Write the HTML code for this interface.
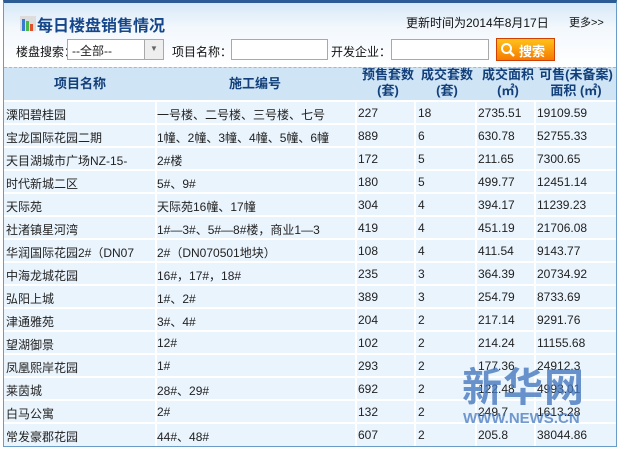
<!DOCTYPE html>
<html><head><meta charset="utf-8"><style>
*{margin:0;padding:0;box-sizing:border-box}
body{width:619px;height:449px;overflow:hidden;background:#fff;font-family:"Liberation Sans","Noto Sans CJK SC",sans-serif;font-size:12px;color:#222;position:relative}
.frame{position:absolute;left:3px;top:0;width:614px;height:447px;border:1px solid #6a9cc8;border-top:3px solid #2d5b93;background:#eaf4fd}
.top{position:absolute;left:4px;top:3px;width:612px;height:64px;background:linear-gradient(#d7e8f7,#f3f8fd 40%,#fff)}
.title{position:absolute;left:37px;top:12px;font-size:16px;font-weight:bold;color:#16468a}
.upd{position:absolute;left:406px;top:14px;font-size:12px;color:#111}
.more{position:absolute;left:569px;top:14px;font-size:11px;color:#111}
.lbl{position:absolute;top:43px;font-size:12px;color:#111}
.inp{position:absolute;top:39px;height:21px;background:#fff;border:1px solid #a9a9a9}
.hdr{position:absolute;left:4px;top:67px;width:612px;height:33px;background:#cfe5f6;border-top:1px dashed #9bbbd8}
.h{position:absolute;font-weight:bold;color:#123f7a;font-size:13px;text-align:center;line-height:16px}
.row{position:absolute;left:4px;width:612px;height:23px;border-top:2px solid #fff}
.c{position:absolute;top:4px;white-space:nowrap;overflow:hidden}
.v{position:absolute;top:0;width:2px;height:100%;background:#fff}
</style></head><body>
<div class="frame"></div>
<div class="top"></div>
<svg style="position:absolute;left:20px;top:16px" width="16" height="15"><rect x="0" y="0" width="16" height="15" fill="#ddd"/><rect x="2" y="3" width="3" height="12" fill="#3a7ad0"/><rect x="6" y="5" width="3" height="10" fill="#4cb84c"/><rect x="10" y="8" width="3" height="7" fill="#e0502a"/></svg>
<div class="title">每日楼盘销售情况</div>
<div class="upd">更新时间为2014年8月17日</div>
<div class="more">更多&gt;&gt;</div>
<div class="lbl" style="left:16px">楼盘搜索：</div>
<div class="inp" style="left:67px;width:77px;border-right:none;padding:2px 4px">--全部--</div>
<div class="inp" style="left:144px;width:20px;background:#eee;font-size:8px;color:#666;text-align:center;line-height:18px">▼</div>
<div class="lbl" style="left:172px">项目名称：</div>
<div class="inp" style="left:231px;width:97px"></div>
<div class="lbl" style="left:331px">开发企业：</div>
<div class="inp" style="left:391px;width:98px"></div>
<div style="position:absolute;left:496px;top:38px;width:59px;height:23px;background:linear-gradient(#ffc21a,#f57a00);border:1px solid #d04000;color:#fff;font-weight:bold;font-size:13px;padding:2px 0 0 22px">搜索</div>
<svg style="position:absolute;left:500px;top:42px" width="16" height="16"><circle cx="6.5" cy="6.5" r="4.5" fill="none" stroke="#fff" stroke-width="2"/><line x1="10" y1="10" x2="14" y2="14" stroke="#fff" stroke-width="2.5"/></svg>
<div class="hdr"></div>
<div class="h" style="left:40px;top:76px;width:80px">项目名称</div>
<div class="h" style="left:215px;top:76px;width:80px">施工编号</div>
<div class="h" style="left:357px;top:67px;width:62px">预售套数<br>(套)</div>
<div class="h" style="left:416px;top:67px;width:62px">成交套数<br>(套)</div>
<div class="h" style="left:477px;top:67px;width:62px">成交面积<br>(㎡)</div>
<div class="h" style="left:533px;top:67px;width:86px">可售(未备案)<br>面积 (㎡)</div>
<div class="row" style="top:100px"><div class="v" style="left:151px"></div><div class="v" style="left:351px"></div><div class="v" style="left:410px"></div><div class="v" style="left:471px"></div><div class="v" style="left:530px"></div><span class="c" style="left:2px">溧阳碧桂园</span><span class="c" style="left:153px">一号楼、二号楼、三号楼、七号</span><span class="c" style="left:354px">227</span><span class="c" style="left:414px">18</span><span class="c" style="left:474px">2735.51</span><span class="c" style="left:533px">19109.59</span></div>
<div class="row" style="top:123px"><div class="v" style="left:151px"></div><div class="v" style="left:351px"></div><div class="v" style="left:410px"></div><div class="v" style="left:471px"></div><div class="v" style="left:530px"></div><span class="c" style="left:2px">宝龙国际花园二期</span><span class="c" style="left:153px">1幢、2幢、3幢、4幢、5幢、6幢</span><span class="c" style="left:354px">889</span><span class="c" style="left:414px">6</span><span class="c" style="left:474px">630.78</span><span class="c" style="left:533px">52755.33</span></div>
<div class="row" style="top:146px"><div class="v" style="left:151px"></div><div class="v" style="left:351px"></div><div class="v" style="left:410px"></div><div class="v" style="left:471px"></div><div class="v" style="left:530px"></div><span class="c" style="left:2px">天目湖城市广场NZ-15-</span><span class="c" style="left:153px">2#楼</span><span class="c" style="left:354px">172</span><span class="c" style="left:414px">5</span><span class="c" style="left:474px">211.65</span><span class="c" style="left:533px">7300.65</span></div>
<div class="row" style="top:169px"><div class="v" style="left:151px"></div><div class="v" style="left:351px"></div><div class="v" style="left:410px"></div><div class="v" style="left:471px"></div><div class="v" style="left:530px"></div><span class="c" style="left:2px">时代新城二区</span><span class="c" style="left:153px">5#、9#</span><span class="c" style="left:354px">180</span><span class="c" style="left:414px">5</span><span class="c" style="left:474px">499.77</span><span class="c" style="left:533px">12451.14</span></div>
<div class="row" style="top:192px"><div class="v" style="left:151px"></div><div class="v" style="left:351px"></div><div class="v" style="left:410px"></div><div class="v" style="left:471px"></div><div class="v" style="left:530px"></div><span class="c" style="left:2px">天际苑</span><span class="c" style="left:153px">天际苑16幢、17幢</span><span class="c" style="left:354px">304</span><span class="c" style="left:414px">4</span><span class="c" style="left:474px">394.17</span><span class="c" style="left:533px">11239.23</span></div>
<div class="row" style="top:215px"><div class="v" style="left:151px"></div><div class="v" style="left:351px"></div><div class="v" style="left:410px"></div><div class="v" style="left:471px"></div><div class="v" style="left:530px"></div><span class="c" style="left:2px">社渚镇星河湾</span><span class="c" style="left:153px">1#—3#、5#—8#楼，商业1—3</span><span class="c" style="left:354px">419</span><span class="c" style="left:414px">4</span><span class="c" style="left:474px">451.19</span><span class="c" style="left:533px">21706.08</span></div>
<div class="row" style="top:238px"><div class="v" style="left:151px"></div><div class="v" style="left:351px"></div><div class="v" style="left:410px"></div><div class="v" style="left:471px"></div><div class="v" style="left:530px"></div><span class="c" style="left:2px;width:148px">华润国际花园2#（DN07</span><span class="c" style="left:153px">2#（DN070501地块）</span><span class="c" style="left:354px">108</span><span class="c" style="left:414px">4</span><span class="c" style="left:474px">411.54</span><span class="c" style="left:533px">9143.77</span></div>
<div class="row" style="top:261px"><div class="v" style="left:151px"></div><div class="v" style="left:351px"></div><div class="v" style="left:410px"></div><div class="v" style="left:471px"></div><div class="v" style="left:530px"></div><span class="c" style="left:2px">中海龙城花园</span><span class="c" style="left:153px">16#，17#，18#</span><span class="c" style="left:354px">235</span><span class="c" style="left:414px">3</span><span class="c" style="left:474px">364.39</span><span class="c" style="left:533px">20734.92</span></div>
<div class="row" style="top:284px"><div class="v" style="left:151px"></div><div class="v" style="left:351px"></div><div class="v" style="left:410px"></div><div class="v" style="left:471px"></div><div class="v" style="left:530px"></div><span class="c" style="left:2px">弘阳上城</span><span class="c" style="left:153px">1#、2#</span><span class="c" style="left:354px">389</span><span class="c" style="left:414px">3</span><span class="c" style="left:474px">254.79</span><span class="c" style="left:533px">8733.69</span></div>
<div class="row" style="top:307px"><div class="v" style="left:151px"></div><div class="v" style="left:351px"></div><div class="v" style="left:410px"></div><div class="v" style="left:471px"></div><div class="v" style="left:530px"></div><span class="c" style="left:2px">津通雅苑</span><span class="c" style="left:153px">3#、4#</span><span class="c" style="left:354px">204</span><span class="c" style="left:414px">2</span><span class="c" style="left:474px">217.14</span><span class="c" style="left:533px">9291.76</span></div>
<div class="row" style="top:330px"><div class="v" style="left:151px"></div><div class="v" style="left:351px"></div><div class="v" style="left:410px"></div><div class="v" style="left:471px"></div><div class="v" style="left:530px"></div><span class="c" style="left:2px">望湖御景</span><span class="c" style="left:153px">12#</span><span class="c" style="left:354px">102</span><span class="c" style="left:414px">2</span><span class="c" style="left:474px">214.24</span><span class="c" style="left:533px">11155.68</span></div>
<div class="row" style="top:353px"><div class="v" style="left:151px"></div><div class="v" style="left:351px"></div><div class="v" style="left:410px"></div><div class="v" style="left:471px"></div><div class="v" style="left:530px"></div><span class="c" style="left:2px">凤凰熙岸花园</span><span class="c" style="left:153px">1#</span><span class="c" style="left:354px">293</span><span class="c" style="left:414px">2</span><span class="c" style="left:474px">177.36</span><span class="c" style="left:533px">24912.3</span></div>
<div class="row" style="top:376px"><div class="v" style="left:151px"></div><div class="v" style="left:351px"></div><div class="v" style="left:410px"></div><div class="v" style="left:471px"></div><div class="v" style="left:530px"></div><span class="c" style="left:2px">莱茵城</span><span class="c" style="left:153px">28#、29#</span><span class="c" style="left:354px">692</span><span class="c" style="left:414px">2</span><span class="c" style="left:474px">122.48</span><span class="c" style="left:533px">4993.01</span></div>
<div class="row" style="top:399px"><div class="v" style="left:151px"></div><div class="v" style="left:351px"></div><div class="v" style="left:410px"></div><div class="v" style="left:471px"></div><div class="v" style="left:530px"></div><span class="c" style="left:2px">白马公寓</span><span class="c" style="left:153px">2#</span><span class="c" style="left:354px">132</span><span class="c" style="left:414px">2</span><span class="c" style="left:474px">249.7</span><span class="c" style="left:533px">1613.28</span></div>
<div class="row" style="top:422px;height:24px"><div class="v" style="left:151px"></div><div class="v" style="left:351px"></div><div class="v" style="left:410px"></div><div class="v" style="left:471px"></div><div class="v" style="left:530px"></div><span class="c" style="left:2px">常发豪郡花园</span><span class="c" style="left:153px">44#、48#</span><span class="c" style="left:354px">607</span><span class="c" style="left:414px">2</span><span class="c" style="left:474px">205.8</span><span class="c" style="left:533px">38044.86</span></div>
<div style="position:absolute;left:462px;top:362px;font-size:40px;font-weight:bold;color:rgba(70,120,190,0.8);letter-spacing:1px;font-family:'Noto Sans CJK SC',sans-serif;line-height:44px">新华网</div>
<div style="position:absolute;left:463px;top:410px;font-size:15px;font-weight:bold;color:rgba(70,120,190,0.75)">WWW.NEWS.CN</div>
</body></html>
